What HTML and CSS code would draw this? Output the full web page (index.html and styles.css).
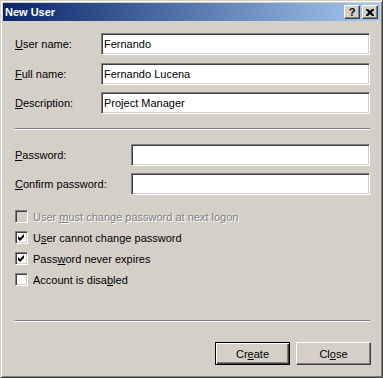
FILE: index.html
```html
<!DOCTYPE html>
<html lang="en">
<head>
    <meta charset="UTF-8">
    <title>New User</title>
    <link rel="stylesheet" href="styles.css">
</head>
<body>
    <div class="window">
        <!-- Title bar -->
        <div class="titlebar">
            <span class="title">New User</span>
            <div class="caption-buttons">
                <span class="cap-btn help">?</span>
                <span class="cap-btn close">
                    <svg width="8" height="7" viewBox="0 0 8 7">
                        <path d="M0 0h2l2 2 2-2h2v1l-2.5 2.5L8 6v1H6L4 5 2 7H0V6l2.5-2.5L0 1z" fill="#000"/>
                    </svg>
                </span>
            </div>
        </div>

        <div class="content">
            <div class="fields">
                <label for="userName"><u>U</u>ser name:</label>
                <input type="text" id="userName" value="Fernando">
                <label for="fullName"><u>F</u>ull name:</label>
                <input type="text" id="fullName" value="Fernando Lucena">
                <label for="desc"><u>D</u>escription:</label>
                <input type="text" id="desc" value="Project Manager">
            </div>

            <div class="separator"></div>

            <div class="fields pw">
                <label for="pw1"><u>P</u>assword:</label>
                <input type="password" id="pw1">
                <label for="pw2"><u>C</u>onfirm password:</label>
                <input type="password" id="pw2">
            </div>

            <div class="options">
                <div class="option disabled">
                    <span class="check"></span>
                    <span class="text">User <u>m</u>ust change password at next logon</span>
                </div>
                <div class="option">
                    <span class="check checked">
                        <svg width="7" height="7" viewBox="0 0 7 7"><path d="M0 2l2 2 4-4v3l-4 4-2-2z" fill="#000"/></svg>
                    </span>
                    <span class="text">U<u>s</u>er cannot change password</span>
                </div>
                <div class="option">
                    <span class="check checked">
                        <svg width="7" height="7" viewBox="0 0 7 7"><path d="M0 2l2 2 4-4v3l-4 4-2-2z" fill="#000"/></svg>
                    </span>
                    <span class="text">Pass<u>w</u>ord never expires</span>
                </div>
                <div class="option">
                    <span class="check"></span>
                    <span class="text">Account is disa<u>b</u>led</span>
                </div>
            </div>

            <div class="separator bottom"></div>

            <div class="actions">
                <button class="default">Cr<u>e</u>ate</button>
                <button>Cl<u>o</u>se</button>
            </div>
        </div>
    </div>
</body>
</html>
```

FILE: styles.css
```css
* {
    margin: 0;
    padding: 0;
    box-sizing: border-box;
    font-family: 'Liberation Sans', Arial, sans-serif;
}

body {
    background: #d4d0c8;
}

/* Window frame */
.window {
    width: 383px;
    height: 378px;
    background: #d4d0c8;
    border: 1px solid;
    border-color: #d4d0c8 #404040 #404040 #d4d0c8;
    box-shadow: inset 1px 1px #fff, inset -1px -1px #808080;
    padding: 2px;
    display: flex;
    flex-direction: column;
}

.titlebar {
    height: 18px;
    background: linear-gradient(to right, #0a246a, #a6caf0);
    display: flex;
    align-items: center;
    justify-content: space-between;
    padding: 0 2px 0 2px;
}

.title {
    color: #fff;
    font-size: 11px;
    font-weight: bold;
}

.caption-buttons {
    display: flex;
    gap: 2px;
}

.cap-btn {
    width: 16px;
    height: 14px;
    background: #d4d0c8;
    border: 1px solid;
    border-color: #fff #404040 #404040 #fff;
    box-shadow: inset -1px -1px #808080;
    display: flex;
    align-items: center;
    justify-content: center;
    font-size: 11px;
    font-weight: bold;
    color: #000;
    line-height: 1;
}

.content {
    padding: 12px 10px 0 12px;
}

.fields {
    display: grid;
    grid-template-columns: 86px 1fr;
    row-gap: 7.5px;
    align-items: center;
}

.fields.pw {
    grid-template-columns: 116px 1fr;
    row-gap: 7px;
}

label, .text {
    font-size: 11px;
    color: #000;
}

input {
    height: 22px;
    width: 100%;
    background: #fff;
    border: 1px solid;
    border-color: #808080 #fff #fff #808080;
    box-shadow: inset 1px 1px #404040, inset -1px -1px #d4d0c8;
    padding: 0 2px;
    font-size: 11px;
    color: #000;
    outline: none;
}

.separator {
    height: 2px;
    border-top: 1px solid #808080;
    border-bottom: 1px solid #fff;
    margin: 14px 0;
}

.options {
    display: flex;
    flex-direction: column;
    gap: 8px;
    margin-top: 15px;
}

.option {
    display: flex;
    align-items: center;
    height: 13px;
}

.check {
    width: 13px;
    height: 13px;
    background: #fff;
    border: 1px solid;
    border-color: #808080 #fff #fff #808080;
    box-shadow: inset 1px 1px #404040, inset -1px -1px #d4d0c8;
    margin-right: 5px;
    display: flex;
    align-items: center;
    justify-content: center;
    flex-shrink: 0;
}

.option.disabled .check {
    background: #d4d0c8;
}

.option.disabled .text {
    color: #808080;
    text-shadow: 1px 1px #fff;
}

.separator.bottom {
    margin: 34px 0 20px;
}

.actions {
    display: flex;
    justify-content: flex-end;
    gap: 6px;
    margin-right: -1px;
}

button {
    width: 75px;
    height: 23px;
    background: #d4d0c8;
    border: 1px solid;
    border-color: #fff #404040 #404040 #fff;
    box-shadow: inset -1px -1px #808080;
    font-size: 11px;
    color: #000;
}

button.default {
    border-color: #000;
    box-shadow: inset 1px 1px #fff, inset -1px -1px #404040, inset -2px -2px #808080;
}
```
